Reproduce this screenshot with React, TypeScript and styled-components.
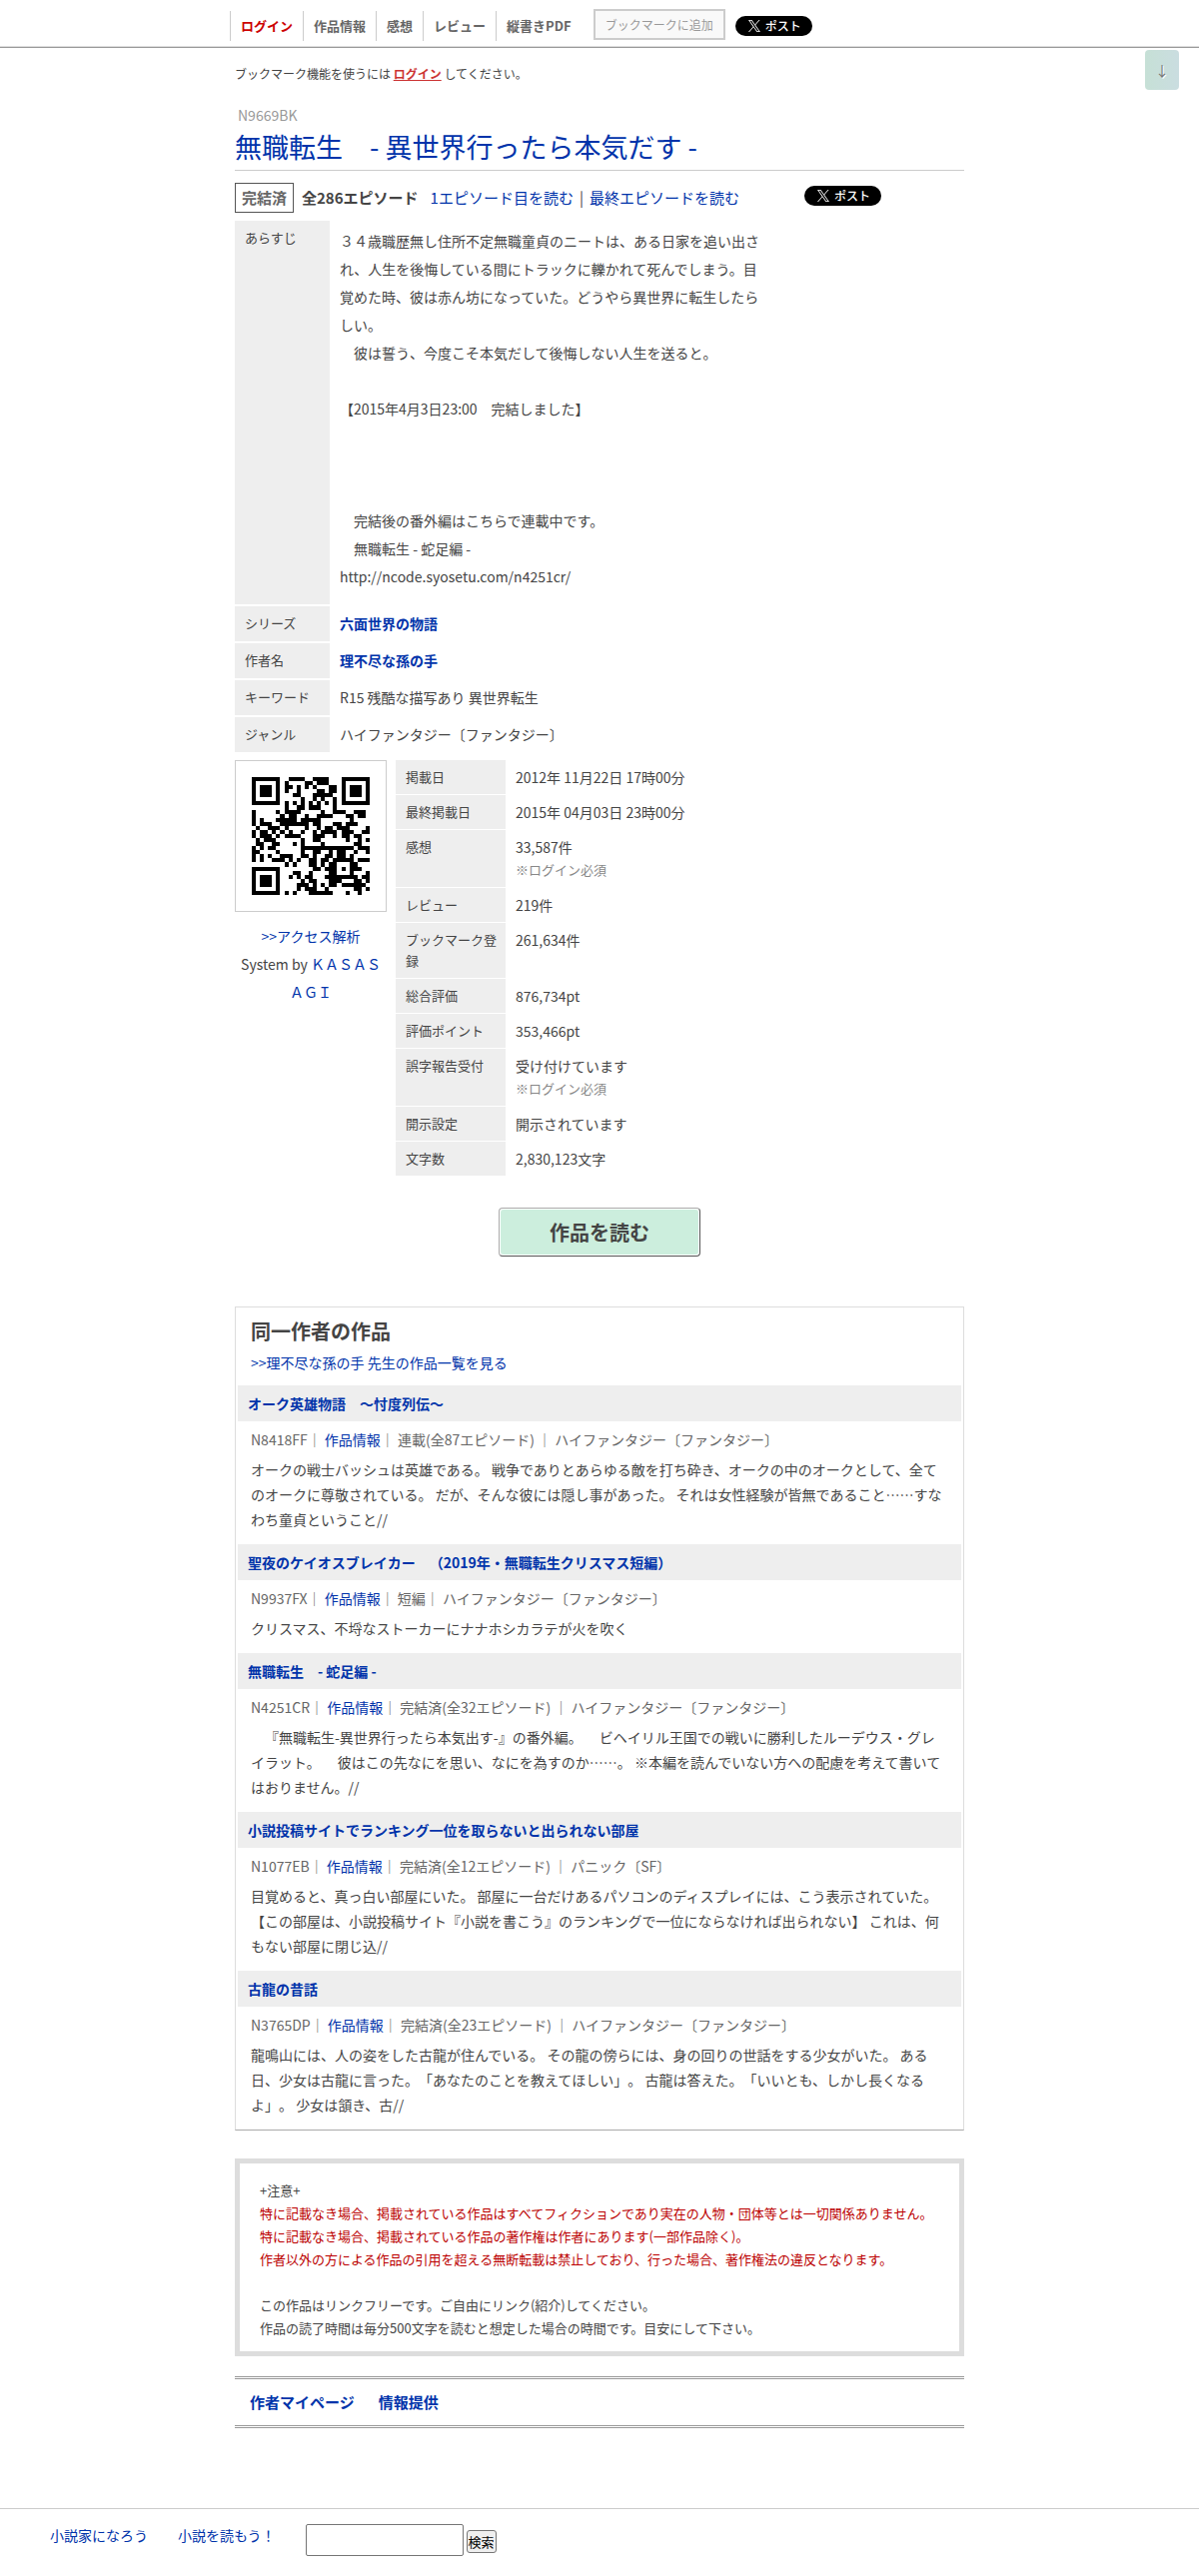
import React from "react";
import styled, { createGlobalStyle } from "styled-components";

const GlobalStyle = createGlobalStyle`
  *, *::before, *::after { box-sizing: border-box; }
  body {
    margin: 0;
    background: #fff;
    color: #444;
    font-family: "Noto Sans CJK JP", sans-serif;
    font-size: 14px;
    line-height: 28px;
    text-spacing-trim: space-all;
  }
  a { color: #03a; text-decoration: none; }
  a:hover { text-decoration: underline; }
  button, input { font-family: inherit; }
`;

/* ---------- QR code (version 3, level M, mask 5) ---------- */

const QR_SIZE = 29;
const QR_DATA = 44;
const QR_EC = 26;
const QR_FORMAT = "100000011001110";

function gfMul(x: number, y: number): number {
  let z = 0;
  for (let i = 7; i >= 0; i--) {
    z = (z << 1) ^ ((z >>> 7) * 0x11d);
    z ^= ((y >>> i) & 1) * x;
  }
  return z;
}

function ecWords(data: number[]): number[] {
  const divisor: number[] = new Array(QR_EC).fill(0);
  divisor[QR_EC - 1] = 1;
  let root = 1;
  for (let i = 0; i < QR_EC; i++) {
    for (let j = 0; j < QR_EC; j++) {
      divisor[j] = gfMul(divisor[j], root);
      if (j + 1 < QR_EC) divisor[j] ^= divisor[j + 1];
    }
    root = gfMul(root, 2);
  }
  const rest: number[] = new Array(QR_EC).fill(0);
  data.forEach((b) => {
    const factor = b ^ (rest.shift() as number);
    rest.push(0);
    divisor.forEach((c, i) => {
      rest[i] ^= gfMul(c, factor);
    });
  });
  return rest;
}

function qrMatrix(text: string): boolean[][] {
  let bits = "0100" + text.length.toString(2).padStart(8, "0");
  for (const ch of text) bits += ch.charCodeAt(0).toString(2).padStart(8, "0");
  bits += "0000";
  const words: number[] = [];
  for (let i = 0; i < bits.length; i += 8) words.push(parseInt(bits.slice(i, i + 8), 2));
  for (let pad = 0xec; words.length < QR_DATA; pad ^= 0xec ^ 0x11) words.push(pad);
  const all = words.concat(ecWords(words));

  const grid: (boolean | null)[][] = Array.from({ length: QR_SIZE }, () =>
    new Array(QR_SIZE).fill(null)
  );
  const set = (r: number, c: number, v: boolean) => {
    if (r >= 0 && c >= 0 && r < QR_SIZE && c < QR_SIZE) grid[r][c] = v;
  };
  for (let i = 0; i < QR_SIZE; i++) {
    set(6, i, i % 2 === 0);
    set(i, 6, i % 2 === 0);
  }
  [[3, 3], [3, QR_SIZE - 4], [QR_SIZE - 4, 3]].forEach(([r, c]) => {
    for (let dr = -4; dr <= 4; dr++)
      for (let dc = -4; dc <= 4; dc++) {
        const d = Math.max(Math.abs(dr), Math.abs(dc));
        set(r + dr, c + dc, d !== 2 && d !== 4);
      }
  });
  for (let dr = -2; dr <= 2; dr++)
    for (let dc = -2; dc <= 2; dc++)
      set(22 + dr, 22 + dc, Math.max(Math.abs(dr), Math.abs(dc)) !== 1);

  const f = (i: number) => QR_FORMAT[14 - i] === "1";
  for (let i = 0; i <= 5; i++) set(i, 8, f(i));
  set(7, 8, f(6));
  set(8, 8, f(7));
  set(8, 7, f(8));
  for (let i = 9; i < 15; i++) set(8, 14 - i, f(i));
  for (let i = 0; i < 8; i++) set(8, QR_SIZE - 1 - i, f(i));
  for (let i = 8; i < 15; i++) set(QR_SIZE - 15 + i, 8, f(i));
  set(QR_SIZE - 8, 8, true);

  let n = 0;
  for (let right = QR_SIZE - 1; right >= 1; right -= 2) {
    if (right === 6) right = 5;
    const upward = ((right + 1) & 2) === 0;
    for (let v = 0; v < QR_SIZE; v++)
      for (let j = 0; j < 2; j++) {
        const c = right - j;
        const r = upward ? QR_SIZE - 1 - v : v;
        if (grid[r][c] !== null) continue;
        const bit = n < all.length * 8 ? (all[n >>> 3] >>> (7 - (n & 7))) & 1 : 0;
        n++;
        grid[r][c] = (bit === 1) !== ((r * c) % 6 === 0);
      }
  }
  return grid as boolean[][];
}

function QrCode({ text }: { text: string }) {
  let d = "";
  qrMatrix(text).forEach((row, r) =>
    row.forEach((on, c) => {
      if (on) d += `M${c} ${r}h1v1h-1z`;
    })
  );
  return (
    <svg
      width="118"
      height="118"
      viewBox={`0 0 ${QR_SIZE} ${QR_SIZE}`}
      shapeRendering="crispEdges"
      role="img"
      aria-label="QRコード"
    >
      <path d={d} fill="#000" />
    </svg>
  );
}

/* ---------- Header ---------- */

const Header = styled.header`
  border-bottom: 1px solid #999;
  box-shadow: inset 0 -1px 0 #ddd;
  height: 48px;
`;

const HeaderInner = styled.div`
  display: flex;
  align-items: flex-start;
  width: 100%;
  max-width: 740px;
  margin: 0 auto;
  padding-top: 9px;
`;

const NavList = styled.ul`
  display: flex;
  margin: 2px 12px 0 0;
  padding: 0;
  list-style: none;
`;

const NavItem = styled.li`
  height: 30px;
  padding: 0 10px;
  border-left: 1px solid #ccc;
  line-height: 28px;
`;

const NavLink = styled.a<{ $accent?: boolean }>`
  color: ${(p) => (p.$accent ? "#c00" : "#666")};
  font-size: 13px;
  font-weight: bold;
`;

const BookmarkButton = styled.button`
  height: 31px;
  margin: 0 10px 0 0;
  padding: 0 10px;
  border: 2px solid #ccc;
  background: #f9f9f9;
  color: #999;
  font-size: 12px;
  line-height: 24px;
`;

const PostLink = styled.a<{ $top: number }>`
  display: inline-flex;
  align-items: center;
  gap: 5px;
  width: 77px;
  height: 20px;
  margin-top: ${(p) => p.$top}px;
  padding-left: 13px;
  border-radius: 10px;
  background: #000;
  color: #fff;
  font-size: 12px;
  font-weight: 500;
  line-height: 20px;
`;

function PostButton({ top }: { top: number }) {
  return (
    <PostLink href="#post" $top={top}>
      <svg width="12" height="12" viewBox="0 0 24 24" aria-hidden="true">
        <path
          fill="#fff"
          d="M14.258 10.152 23.176 0h-2.113l-7.747 8.813L7.133 0H0l9.352 13.328L0 23.973h2.113l8.176-9.309 6.531 9.309h7.133zm-2.895 3.293-.949-1.328L2.875 1.56h3.246l6.086 8.523.945 1.328 7.91 11.078h-3.246z"
        />
      </svg>
      <span>ポスト</span>
    </PostLink>
  );
}

const JumpLink = styled.a`
  position: absolute;
  top: 50px;
  right: 20px;
  width: 34px;
  height: 40px;
  border-radius: 4px;
  background: linear-gradient(to right, #c6e0d6, #cadde0);
  color: #777;
  font-size: 14px;
  line-height: 40px;
  text-align: center;
  text-shadow: 1px 1px 0 #fff;
`;

/* ---------- Work summary ---------- */

const Main = styled.main`
  width: 100%;
  max-width: 730px;
  margin: 0 auto;
  padding-top: 16px;
`;

const LoginNote = styled.p`
  margin: 0 0 21px;
  font-size: 12px;
  line-height: 20px;
  a { color: #c33; font-weight: bold; text-decoration: underline; }
`;

const Ncode = styled.p`
  margin: 0;
  padding-left: 3px;
  color: #999;
  line-height: 20px;
`;

const Title = styled.h1`
  margin: 0;
  padding: 4px 0 5px;
  border-bottom: 1px solid #ccc;
  font-size: 27px;
  font-weight: normal;
  line-height: 36px;
`;

const Summary = styled.div`
  display: flex;
  padding-top: 12px;
`;

const Details = styled.div`
  flex: 0 1 570px;
  padding-right: 30px;
`;

const StatusRow = styled.div`
  display: flex;
  align-items: center;
  margin-bottom: 8px;
  font-size: 15px;
  white-space: nowrap;
`;

const StatusBadge = styled.span`
  margin-right: 8px;
  padding: 0 6px;
  border: 1px solid #555;
  color: #666;
  font-weight: bold;
`;

const EpisodeCount = styled.strong`
  margin-right: 12px;
`;

const Divider = styled.span`
  margin: 0 6px;
`;

const InfoTable = styled.table<{ $head: number; $gap: number; $line: number }>`
  width: 100%;
  border-collapse: separate;
  border-spacing: 0;
  table-layout: fixed;
  line-height: 22px;
  th {
    width: ${(p) => p.$head}px;
    padding: 6px 5px 7px 10px;
    border-bottom: ${(p) => p.$gap}px solid #fff;
    background: #eee;
    font-size: 13px;
    font-weight: normal;
    line-height: ${(p) => p.$line}px;
    text-align: left;
    vertical-align: top;
  }
  td {
    padding: 6px 10px;
    vertical-align: top;
  }
`;

const Synopsis = styled.p`
  margin: 0;
  padding-bottom: 10px;
  line-height: 28px;
  white-space: pre-line;
`;

const Strong = styled.a`
  font-weight: bold;
`;

const StatsRow = styled.div`
  display: flex;
  align-items: flex-start;
  gap: 9px;
  margin-top: 6px;
`;

const QrColumn = styled.div`
  flex: none;
  width: 152px;
  text-align: center;
`;

const QrFrame = styled.div`
  display: flex;
  margin-bottom: 10px;
  padding: 16px;
  border: 1px solid #ccc;
`;

const QrCaption = styled.p`
  margin: 0;
  padding: 0 5px;
`;

const Note = styled.div`
  color: #888;
  font-size: 13px;
  line-height: 24px;
`;

const ReadButton = styled.a`
  display: block;
  width: 202px;
  margin: 31px auto 50px;
  padding: 1px;
  border: 1px solid;
  border-color: #aaa #555 #555 #aaa;
  border-radius: 4px;
  color: #444;
  font-size: 20px;
  font-weight: bold;
  text-align: center;
  span {
    display: block;
    border-radius: 3px;
    background: #ced;
    line-height: 45px;
  }
`;

/* ---------- Other works ---------- */

const OtherWorks = styled.section`
  padding: 9px 2px 0;
  border: 1px solid #ddd;
  border-bottom-color: #aaa;
`;

const OtherHead = styled.div`
  padding: 0 13px 11px;
  line-height: 24px;
  h2 { margin: 0 0 4px; font-size: 20px; line-height: 30px; }
`;

const WorkTitle = styled.h3`
  margin: 0;
  padding: 0 10px;
  background: #eee;
  font-size: 14px;
  line-height: 36px;
`;

const WorkBody = styled.div`
  padding: 6px 13px 12px;
  line-height: 25px;
  p { margin: 5px 0 0; }
`;

const WorkMeta = styled.div`
  color: #666;
`;

/* ---------- Notices and footer ---------- */

const Notice = styled.section`
  margin: 28px 0 20px;
  padding: 15px 20px 12px;
  border: 5px solid #ddd;
  font-size: 13px;
  line-height: 23px;
  p { margin: 0; }
`;

const Warning = styled.p`
  padding-bottom: 23px;
  color: #b00;
`;

const AuthorNav = styled.nav`
  display: flex;
  gap: 24px;
  padding: 0 15px;
  border: 3px double #999;
  border-width: 3px 0;
  font-size: 15px;
  font-weight: bold;
  line-height: 46px;
`;

const Footer = styled.footer`
  display: flex;
  align-items: flex-start;
  gap: 30px;
  margin-top: 80px;
  padding: 12px 50px 20px;
  border-top: 1px solid #ccc;
`;

const SearchForm = styled.form`
  display: flex;
  align-items: center;
  gap: 3px;
  margin-top: 3px;
`;

const SearchBox = styled.input`
  width: 158px;
  height: 32px;
  border: 1px solid #767676;
  border-radius: 2px;
`;

const SearchButton = styled.button`
  height: 23px;
  margin-top: 3px;
  padding: 0 1px;
  border: 1px solid #767676;
  border-radius: 3px;
  background: #efefef;
  color: #000;
  font-size: 13px;
  line-height: 20px;
`;

/* ---------- Data ---------- */

const synopsis = `３４歳職歴無し住所不定無職童貞のニートは、ある日家を追い出され、人生を後悔している間にトラックに轢かれて死んでしまう。目覚めた時、彼は赤ん坊になっていた。どうやら異世界に転生したらしい。
　彼は誓う、今度こそ本気だして後悔しない人生を送ると。

【2015年4月3日23:00　完結しました】



　完結後の番外編はこちらで連載中です。
　無職転生 - 蛇足編 -
http://ncode.syosetu.com/n4251cr/`;

const stats: { label: string; value: string; note?: boolean }[] = [
  { label: "掲載日", value: "2012年 11月22日 17時00分" },
  { label: "最終掲載日", value: "2015年 04月03日 23時00分" },
  { label: "感想", value: "33,587件", note: true },
  { label: "レビュー", value: "219件" },
  { label: "ブックマーク登録", value: "261,634件" },
  { label: "総合評価", value: "876,734pt" },
  { label: "評価ポイント", value: "353,466pt" },
  { label: "誤字報告受付", value: "受け付けています", note: true },
  { label: "開示設定", value: "開示されています" },
  { label: "文字数", value: "2,830,123文字" },
];

const works = [
  {
    code: "N8418FF",
    title: "オーク英雄物語　～忖度列伝～",
    status: "連載(全87エピソード) ",
    genre: "ハイファンタジー〔ファンタジー〕",
    text: "オークの戦士バッシュは英雄である。 戦争でありとあらゆる敵を打ち砕き、オークの中のオークとして、全てのオークに尊敬されている。 だが、そんな彼には隠し事があった。 それは女性経験が皆無であること……すなわち童貞ということ//",
  },
  {
    code: "N9937FX",
    title: "聖夜のケイオスブレイカー　（2019年・無職転生クリスマス短編）",
    status: "短編",
    genre: "ハイファンタジー〔ファンタジー〕",
    text: "クリスマス、不埒なストーカーにナナホシカラテが火を吹く",
  },
  {
    code: "N4251CR",
    title: "無職転生　- 蛇足編 -",
    status: "完結済(全32エピソード) ",
    genre: "ハイファンタジー〔ファンタジー〕",
    text: "　『無職転生-異世界行ったら本気出す-』の番外編。 　ビヘイリル王国での戦いに勝利したルーデウス・グレイラット。 　彼はこの先なにを思い、なにを為すのか……。 ※本編を読んでいない方への配慮を考えて書いてはおりません。//",
  },
  {
    code: "N1077EB",
    title: "小説投稿サイトでランキング一位を取らないと出られない部屋",
    status: "完結済(全12エピソード) ",
    genre: "パニック〔SF〕",
    text: "目覚めると、真っ白い部屋にいた。 部屋に一台だけあるパソコンのディスプレイには、こう表示されていた。 【この部屋は、小説投稿サイト『小説を書こう』のランキングで一位にならなければ出られない】 これは、何もない部屋に閉じ込//",
  },
  {
    code: "N3765DP",
    title: "古龍の昔話",
    status: "完結済(全23エピソード) ",
    genre: "ハイファンタジー〔ファンタジー〕",
    text: "龍鳴山には、人の姿をした古龍が住んでいる。 その龍の傍らには、身の回りの世話をする少女がいた。 ある日、少女は古龍に言った。「あなたのことを教えてほしい」。 古龍は答えた。「いいとも、しかし長くなるよ」。 少女は頷き、古//",
  },
];

export default function App() {
  return (
    <>
      <GlobalStyle />
      <Header>
        <HeaderInner>
          <NavList>
            <NavItem><NavLink href="#login" $accent>ログイン</NavLink></NavItem>
            <NavItem><NavLink href="#info">作品情報</NavLink></NavItem>
            <NavItem><NavLink href="#impression">感想</NavLink></NavItem>
            <NavItem><NavLink href="#review">レビュー</NavLink></NavItem>
            <NavItem><NavLink href="#pdf">縦書きPDF</NavLink></NavItem>
          </NavList>
          <BookmarkButton type="button">ブックマークに追加</BookmarkButton>
          <PostButton top={7} />
        </HeaderInner>
      </Header>
      <JumpLink href="#footer">↓</JumpLink>

      <Main>
        <LoginNote>
          ブックマーク機能を使うには <a href="#login">ログイン</a> してください。
        </LoginNote>
        <Ncode>N9669BK</Ncode>
        <Title><a href="#work">無職転生　- 異世界行ったら本気だす -</a></Title>

        <Summary>
          <Details>
            <StatusRow>
              <StatusBadge>完結済</StatusBadge>
              <EpisodeCount>全286エピソード</EpisodeCount>
              <a href="#first">1エピソード目を読む</a>
              <Divider>|</Divider>
              <a href="#last">最終エピソードを読む</a>
            </StatusRow>

            <InfoTable $head={95} $gap={2} $line={22}>
              <tbody>
                <tr>
                  <th scope="row">あらすじ</th>
                  <td><Synopsis>{synopsis}</Synopsis></td>
                </tr>
                <tr>
                  <th scope="row">シリーズ</th>
                  <td><Strong href="#series">六面世界の物語</Strong></td>
                </tr>
                <tr>
                  <th scope="row">作者名</th>
                  <td><Strong href="#author">理不尽な孫の手</Strong></td>
                </tr>
                <tr>
                  <th scope="row">キーワード</th>
                  <td>R15 残酷な描写あり 異世界転生</td>
                </tr>
                <tr>
                  <th scope="row">ジャンル</th>
                  <td>ハイファンタジー〔ファンタジー〕</td>
                </tr>
              </tbody>
            </InfoTable>

            <StatsRow>
              <QrColumn>
                <QrFrame><QrCode text="https://ncode.syosetu.com/n9669bk/" /></QrFrame>
                <QrCaption><a href="#access">&gt;&gt;アクセス解析</a></QrCaption>
                <QrCaption>System by <a href="#kasasagi">ＫＡＳＡＳＡＧＩ</a></QrCaption>
              </QrColumn>
              <InfoTable $head={110} $gap={1} $line={21}>
                <tbody>
                  {stats.map((s) => (
                    <tr key={s.label}>
                      <th scope="row">{s.label}</th>
                      <td>
                        {s.value}
                        {s.note && <Note>※ログイン必須</Note>}
                      </td>
                    </tr>
                  ))}
                </tbody>
              </InfoTable>
            </StatsRow>
          </Details>
          <PostButton top={3} />
        </Summary>

        <ReadButton href="#read"><span>作品を読む</span></ReadButton>

        <OtherWorks>
          <OtherHead>
            <h2>同一作者の作品</h2>
            <a href="#list">&gt;&gt;理不尽な孫の手 先生の作品一覧を見る</a>
          </OtherHead>
          {works.map((w) => (
            <article key={w.code}>
              <WorkTitle><a href={`#${w.code}`}>{w.title}</a></WorkTitle>
              <WorkBody>
                <WorkMeta>
                  {w.code}｜ <a href={`#info-${w.code}`}>作品情報</a>｜ {w.status}｜ {w.genre}
                </WorkMeta>
                <p>{w.text}</p>
              </WorkBody>
            </article>
          ))}
        </OtherWorks>

        <Notice>
          <p>+注意+</p>
          <Warning>
            特に記載なき場合、掲載されている作品はすべてフィクションであり実在の人物・団体等とは一切関係ありません。
            <br />
            特に記載なき場合、掲載されている作品の著作権は作者にあります(一部作品除く)。
            <br />
            作者以外の方による作品の引用を超える無断転載は禁止しており、行った場合、著作権法の違反となります。
          </Warning>
          <p>
            この作品はリンクフリーです。ご自由にリンク(紹介)してください。
            <br />
            作品の読了時間は毎分500文字を読むと想定した場合の時間です。目安にして下さい。
          </p>
        </Notice>

        <AuthorNav>
          <a href="#mypage">作者マイページ</a>
          <a href="#report">情報提供</a>
        </AuthorNav>
      </Main>

      <Footer id="footer">
        <a href="#narou">小説家になろう</a>
        <a href="#yomou">小説を読もう！</a>
        <SearchForm role="search" onSubmit={(e) => e.preventDefault()}>
          <SearchBox type="text" name="word" aria-label="検索ワード" />
          <SearchButton type="submit">検索</SearchButton>
        </SearchForm>
      </Footer>
    </>
  );
}
